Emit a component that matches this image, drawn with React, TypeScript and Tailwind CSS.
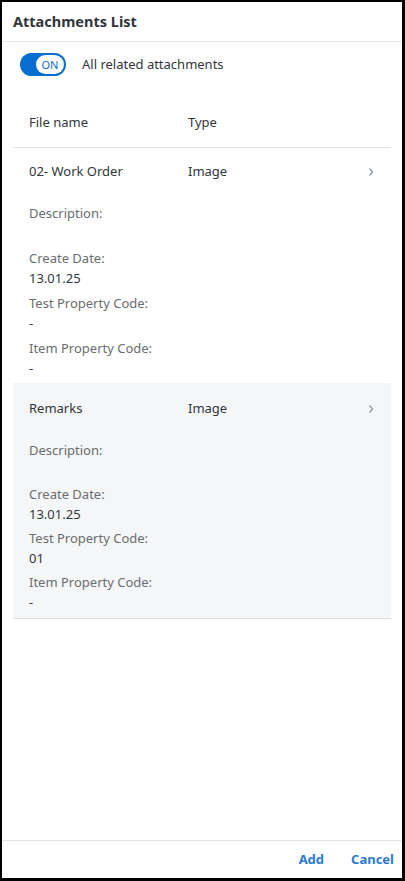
import React from 'react';

type Field = { label: string; value: string };

type Row = { name: string; type: string; fields: Field[]; shaded?: boolean };

const rows: Row[] = [
  {
    name: '02- Work Order',
    type: 'Image',
    fields: [
      { label: 'Description:', value: '' },
      { label: 'Create Date:', value: '13.01.25' },
      { label: 'Test Property Code:', value: '-' },
      { label: 'Item Property Code:', value: '-' },
    ],
  },
  {
    name: 'Remarks',
    type: 'Image',
    shaded: true,
    fields: [
      { label: 'Description:', value: '' },
      { label: 'Create Date:', value: '13.01.25' },
      { label: 'Test Property Code:', value: '01' },
      { label: 'Item Property Code:', value: '-' },
    ],
  },
];

function Chevron() {
  return (
    <svg width="8" height="10" viewBox="0 0 8 10" className="text-[#89919a]">
      <path d="M2.5 1.5 L5.5 5 L2.5 8.5" fill="none" stroke="currentColor" strokeWidth="1.2" />
    </svg>
  );
}

function ListRow({ row }: { row: Row }) {
  return (
    <div
      className={`pl-4 pr-4 ${
        row.shaded ? 'pt-[15px] pb-[6px] bg-[#f5f6f7] border-b border-[#dcdee0]' : 'pt-[13px] pb-[5px]'
      }`}
    >
      {/* main line */}
      <div className="flex items-center h-[22px]">
        <span className="w-[159px] text-[#32363a]">{row.name}</span>
        <span className="flex-1 text-[#32363a]">{row.type}</span>
        <Chevron />
      </div>
      {/* details */}
      <div className={`mt-5 flex flex-col ${row.shaded ? 'gap-1' : 'gap-[5px]'}`}>
        {row.fields.map((f) => (
          <div key={f.label}>
            <div className="h-5 leading-5 text-[#6a6d70]">{f.label}</div>
            <div className="h-5 leading-5 text-[#32363a]">{f.value}</div>
          </div>
        ))}
      </div>
    </div>
  );
}

export default function App() {
  return (
    <div
      className="w-[405px] h-[881px] bg-white border-black border-l-2 border-t-2 border-r-[3px] border-b-[3px] flex flex-col text-[13px]"
      style={{ fontFamily: '"Noto Sans", "Open Sans", sans-serif' }}
    >
      {/* Header */}
      <div className="h-[40px] flex items-center pl-[11px] border-b border-[#e4e4e4] shrink-0">
        <h1 className="text-[14.5px] font-bold text-[#32363a]">Attachments List</h1>
      </div>

      {/* Toggle */}
      <div className="flex items-center h-[45px] pl-[18px] shrink-0">
        <div className="w-[46px] h-[23px] rounded-full bg-[#0a6ed1] flex items-center justify-end pr-[2px]">
          <div className="w-[28px] h-[19px] rounded-full bg-white flex items-center justify-center text-[11px] text-[#0a6ed1] leading-none">
            ON
          </div>
        </div>
        <span className="ml-4 text-[#32363a]">All related attachments</span>
      </div>

      {/* Table */}
      <div className="mx-[11px] flex-1">
        <div className="flex items-center h-[61px] pt-[12px] pl-4 border-b border-[#e4e4e4]">
          <span className="w-[159px] text-[#32363a]">File name</span>
          <span className="text-[#32363a]">Type</span>
        </div>
        {rows.map((r) => (
          <ListRow key={r.name} row={r} />
        ))}
      </div>

      {/* Footer */}
      <div className="h-[38px] border-t border-[#e4e4e4] flex items-center justify-end gap-[27px] pr-[8px] shrink-0">
        <button className="font-bold text-[#2b7bd0] text-[13px]">Add</button>
        <button className="font-bold text-[#2b7bd0] text-[13px]">Cancel</button>
      </div>
    </div>
  );
}
